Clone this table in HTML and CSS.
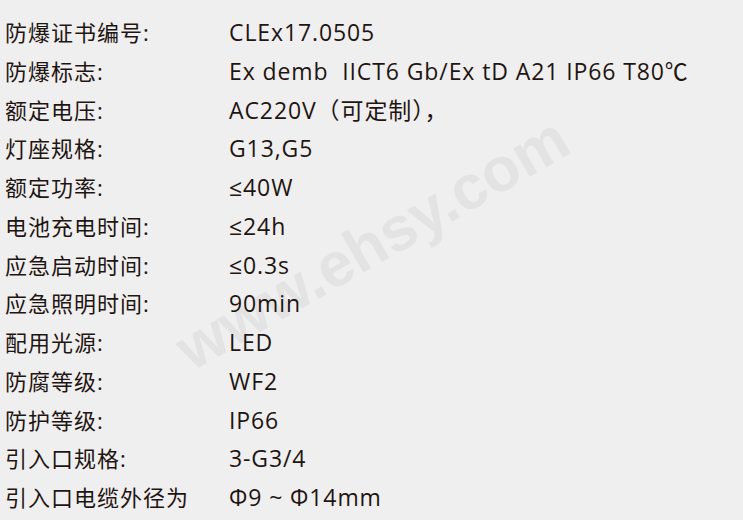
FILE: index.html
```html
<!DOCTYPE html>
<html lang="zh-CN">
<head>
<meta charset="utf-8">
<title>参数</title>
<link rel="stylesheet" href="styles.css">
</head>
<body>
<div class="sheet">
  <div class="watermark">www.ehsy.com</div>
  <dl class="specs">
    <dt>防爆证书编号:</dt><dd>CLEx17.0505</dd>
    <dt>防爆标志:</dt><dd>Ex demb&nbsp; IICT6 Gb/Ex tD A21 IP66 T80℃</dd>
    <dt>额定电压:</dt><dd>AC220V（可定制），</dd>
    <dt>灯座规格:</dt><dd>G13,G5</dd>
    <dt>额定功率:</dt><dd>≤40W</dd>
    <dt>电池充电时间:</dt><dd>≤24h</dd>
    <dt>应急启动时间:</dt><dd>≤0.3s</dd>
    <dt>应急照明时间:</dt><dd>90min</dd>
    <dt>配用光源:</dt><dd>LED</dd>
    <dt>防腐等级:</dt><dd>WF2</dd>
    <dt>防护等级:</dt><dd>IP66</dd>
    <dt>引入口规格:</dt><dd>3-G3/4</dd>
    <dt>引入口电缆外径为</dt><dd>Φ9 ~ Φ14mm</dd>
  </dl>
</div>
</body>
</html>
```
FILE: styles.css
```css
html, body {
  margin: 0;
  padding: 0;
  background: #efefef;
}
.sheet {
  position: relative;
  width: 743px;
  height: 520px;
  overflow: hidden;
  background: #efefef;
}
.specs {
  position: relative;
  z-index: 1;
  margin: 0;
  padding: 13px 0 0 5px;
  display: grid;
  grid-template-columns: 224px auto;
  grid-auto-rows: 38.75px;
  align-items: center;
  font-family: "Open Sans", "Noto Sans CJK SC", sans-serif;
  font-size: 22px;
  color: #1f1512;
}
.specs dt, .specs dd {
  margin: 0;
  line-height: 38.75px;
  white-space: nowrap;
}
.specs dt {
  letter-spacing: 1px;
}
.specs dd {
  font-size: 23px;
  letter-spacing: 0.9px;
}
.watermark {
  position: absolute;
  z-index: 0;
  left: 372px;
  top: 243px;
  transform: translate(-50%, -50%) rotate(-30deg);
  font-family: "Liberation Sans", Arial, sans-serif;
  font-size: 62px;
  font-weight: bold;
  color: #e3e3e3;
  white-space: nowrap;
  pointer-events: none;
}
```
